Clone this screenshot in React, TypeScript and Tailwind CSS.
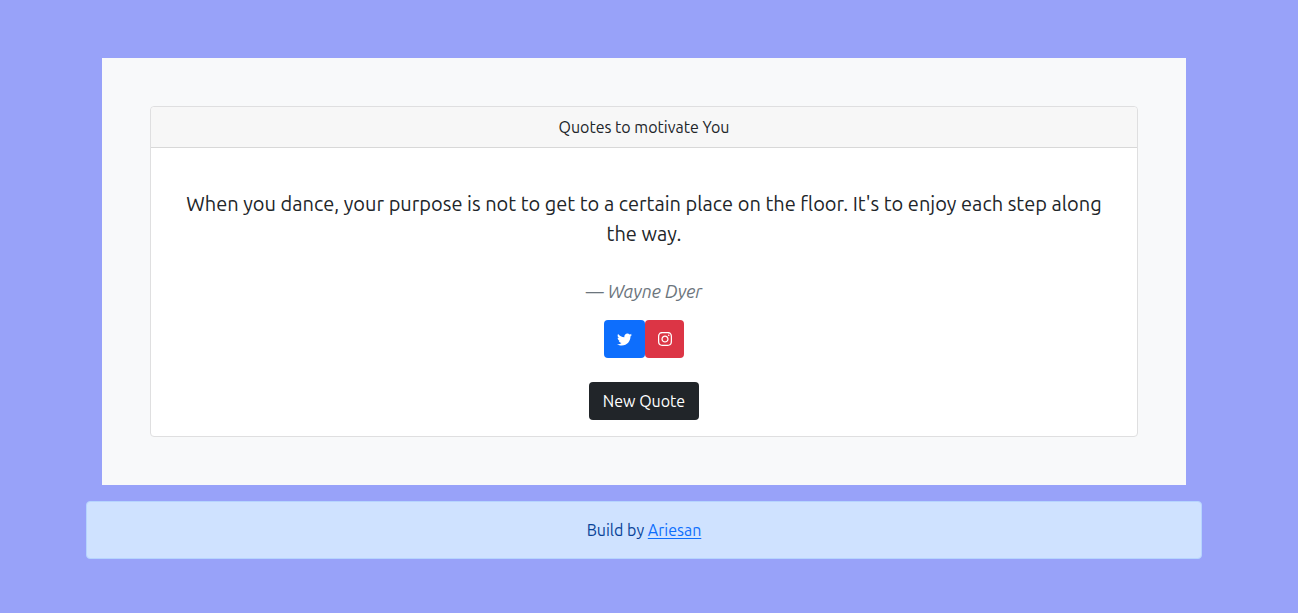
import { useState } from 'react';
import { FaTwitter } from 'react-icons/fa';
import { FaInstagram } from 'react-icons/fa6';

const quotes = [
  {
    text: "When you dance, your purpose is not to get to a certain place on the floor. It's to enjoy each step along the way.",
    author: 'Wayne Dyer',
  },
  {
    text: 'Life is what happens while you are busy making other plans.',
    author: 'John Lennon',
  },
];

export default function App() {
  const [index, setIndex] = useState(0);
  const quote = quotes[index];

  return (
    <div className="min-h-screen bg-[#98a2f9] pt-[58px] pr-24 pb-12 pl-[86px] text-center font-['Ubuntu','Noto_Sans',sans-serif] text-base leading-6 text-[#212529]">
      <main className="mx-4 bg-[#f8f9fa] p-12">
        <section className="rounded border border-[#dfdfe0] bg-white">
          <h1 className="rounded-t border-b border-[#d8d8d8] bg-[#f7f7f7] px-4 py-2">Quotes to motivate You</h1>
          <div className="flex flex-col items-center px-6 pt-[41px] pb-4">
            <figure>
              <blockquote className="text-xl leading-[30px]">{quote.text}</blockquote>
              <figcaption className="mt-7 text-lg leading-7 text-[#6c757d]">
                — <cite>{quote.author}</cite>
              </figcaption>
            </figure>
            <div className="mt-[15px] flex">
              <a href="#twitter" aria-label="Share on Twitter" className="flex h-[38px] w-[41px] items-center justify-center rounded bg-[#0d6efd] pr-px text-white">
                <FaTwitter size={15} />
              </a>
              <a href="#instagram" aria-label="Share on Instagram" className="flex h-[38px] w-[39px] items-center justify-center rounded bg-[#dc3545] text-white">
                <FaInstagram size={16} />
              </a>
            </div>
            <button
              type="button"
              onClick={() => setIndex((index + 1) % quotes.length)}
              className="mt-6 h-[38px] w-[110px] rounded bg-[#212529] text-white"
            >
              New Quote
            </button>
          </div>
        </section>
      </main>
      <footer className="mt-4 rounded border border-[#b6d4fe] bg-[#cfe2ff] p-4 text-[#084298]">
        Build by{' '}
        <a href="#ariesan" className="text-[#0d6efd] underline underline-offset-2">Ariesan</a>
      </footer>
    </div>
  );
}
